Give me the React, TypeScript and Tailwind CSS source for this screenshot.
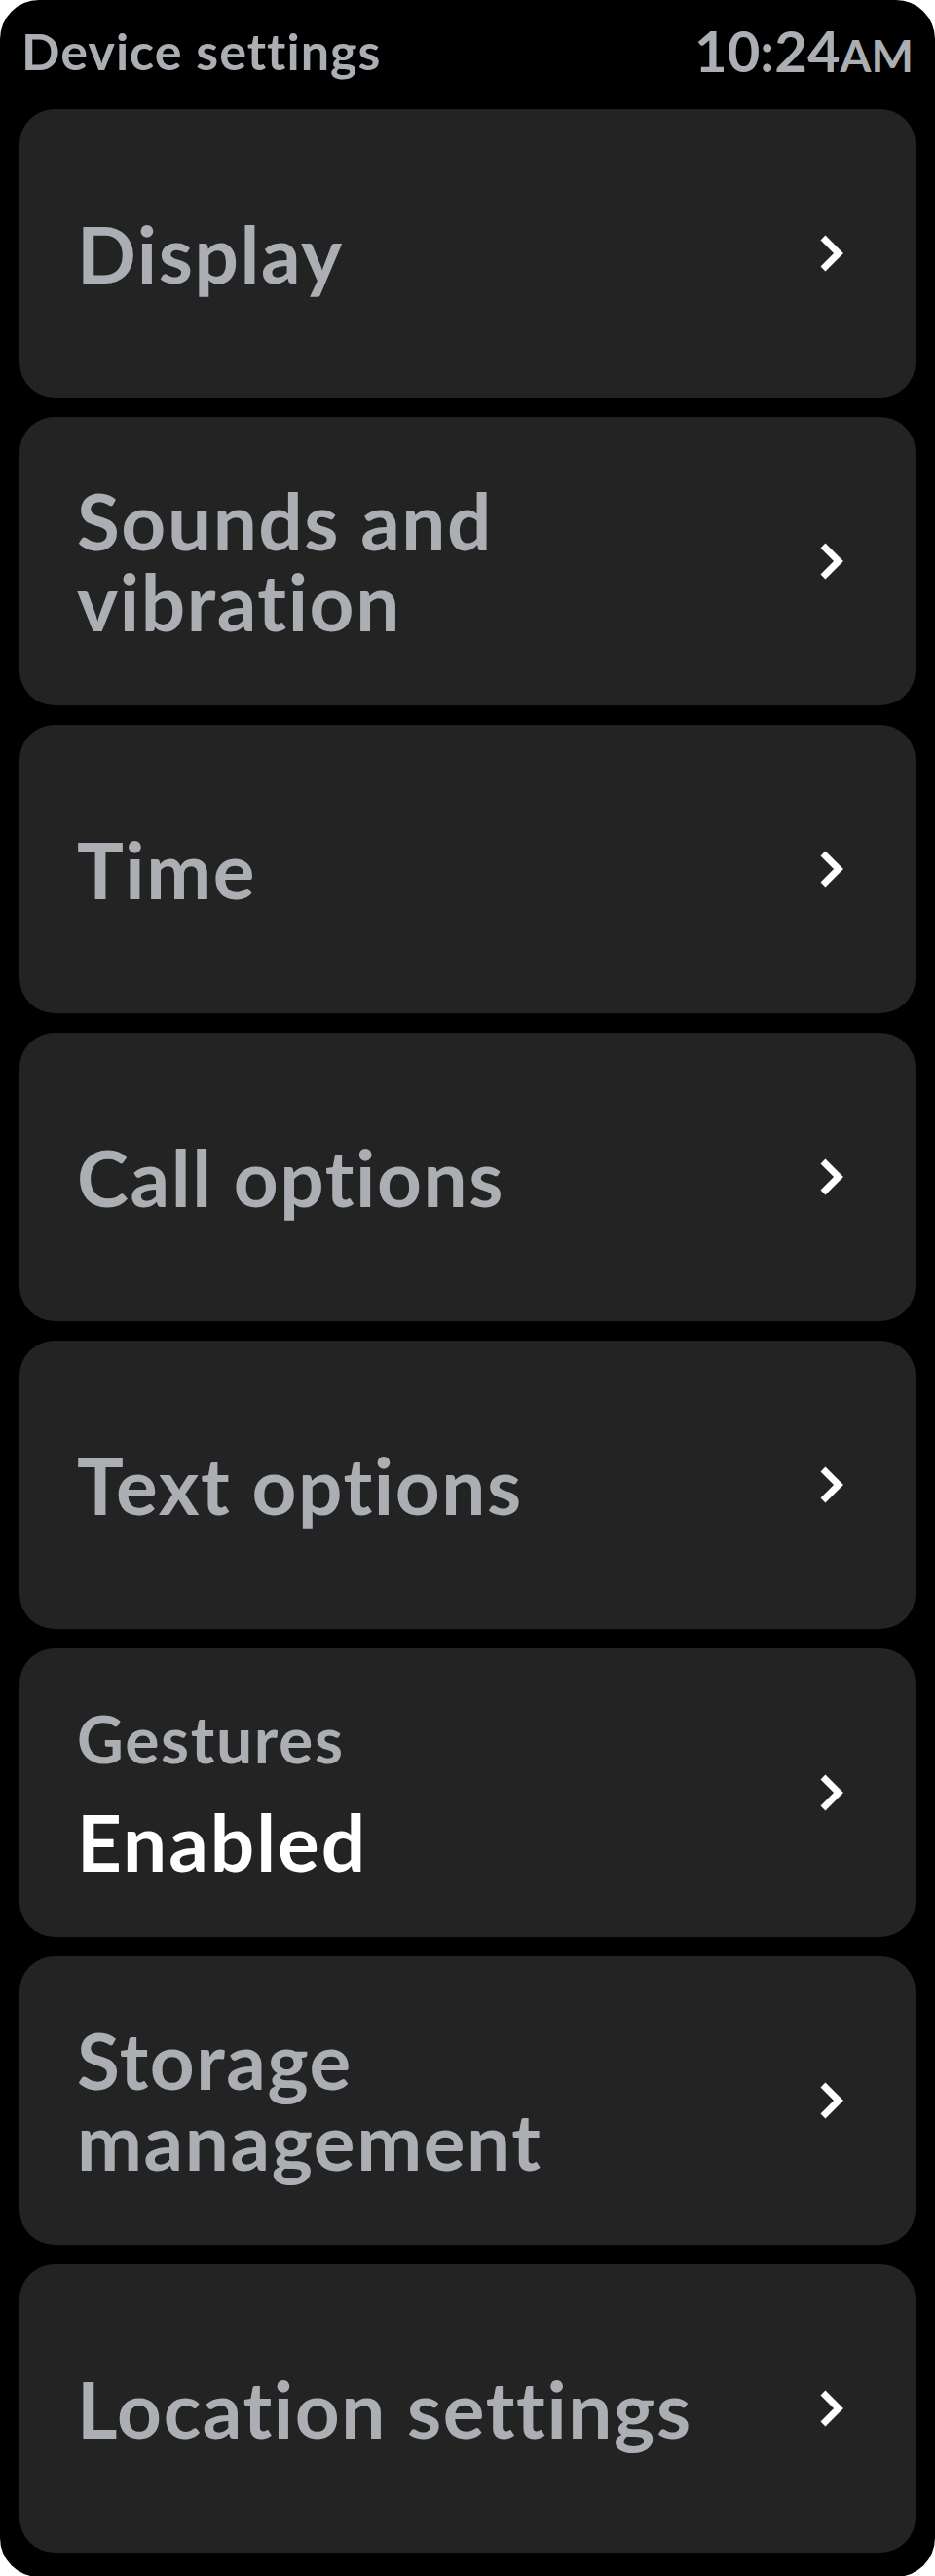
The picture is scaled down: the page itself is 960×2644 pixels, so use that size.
import { ReactNode } from 'react';

interface SettingRowProps {
  children: ReactNode;
}

function Chevron() {
  return (
    <svg width="28" height="40" viewBox="0 0 28 40" className="shrink-0">
      <polyline
        points="5,4 21,20 5,36"
        fill="none"
        stroke="#ffffff"
        strokeWidth="7"
        strokeLinejoin="miter"
        strokeLinecap="butt"
      />
    </svg>
  );
}

function SettingRow({ children }: SettingRowProps) {
  return (
    <div className="h-[296px] bg-[#232323] rounded-[36px] flex items-center justify-between pl-[59px] pr-[72px]">
      <div className="flex-1 min-w-0">{children}</div>
      <Chevron />
    </div>
  );
}

const items = [
  'Display',
  'Sounds and\nvibration',
  'Time',
  'Call options',
  'Text options',
  null,
  'Storage\nmanagement',
  'Location settings',
];

export default function App() {
  return (
    <div
      className="min-h-[2644px] bg-black rounded-[40px] pb-[25px] [font-variant-ligatures:none]"
      style={{ fontFamily: 'Lato, "Open Sans", sans-serif' }}
    >
      {/* Status header */}
      <div className="h-[112px] flex items-start justify-between px-[22px] pt-[20px]">
        <h1 className="text-[52px] leading-[64px] font-bold tracking-[0.02em] text-[#abafb4]">
          Device settings
        </h1>
        <div className="flex items-baseline text-[#abafb4] font-bold leading-[64px]">
          <span className="text-[58px]">10:24</span>
          <span className="text-[46px]">AM</span>
        </div>
      </div>

      {/* Settings list */}
      <div className="flex flex-col gap-5 px-5">
        {items.map((label, i) =>
          label === null ? (
            <SettingRow key={i}>
              <div className="text-[66px] leading-[100px] font-bold tracking-[0.025em] text-[#abafb4]">
                Gestures
              </div>
              <div className="text-[80px] leading-[111px] font-bold tracking-[0.025em] text-white">
                Enabled
              </div>
            </SettingRow>
          ) : (
            <SettingRow key={i}>
              <div className="text-[80px] leading-[83px] font-bold tracking-[0.02em] text-[#abafb4] whitespace-pre-line">
                {label}
              </div>
            </SettingRow>
          )
        )}
      </div>
    </div>
  );
}
